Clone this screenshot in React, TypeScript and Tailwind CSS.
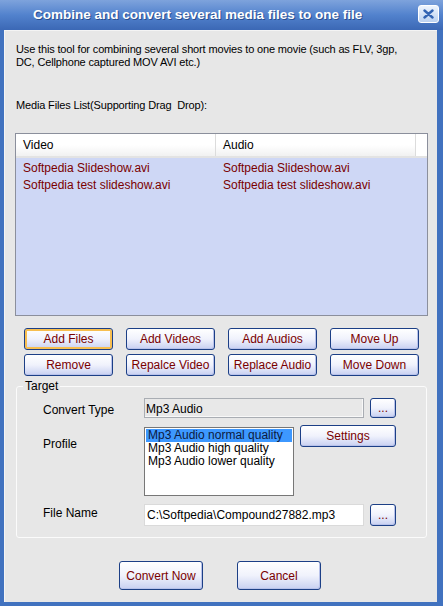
import React from 'react';

const font = { fontFamily: '"Liberation Sans", Arial, sans-serif' };

interface XPButtonProps {
  label: string;
  className?: string;
  focused?: boolean;
}

function XPButton({ label, className = '', focused = false }: XPButtonProps) {
  return (
    <button
      type="button"
      className={
        'flex items-center justify-center rounded-[3px] border border-[#1c3f86] bg-linear-to-b from-white via-[#f0f2fc] to-[#c8d0f1] text-[12px] leading-none text-[#7a0000] ' +
        (focused ? 'shadow-[inset_0_0_0_2px_#f7be4f] ' : 'shadow-[inset_-1px_-1px_0_#b8c2ea] ') +
        className
      }
    >
      {label}
    </button>
  );
}

const rows = [
  ['Softpedia Slideshow.avi', 'Softpedia Slideshow.avi'],
  ['Softpedia test slideshow.avi', 'Softpedia test slideshow.avi'],
];

export default function App() {
  return (
    <div className="flex h-[606px] w-[443px] flex-col bg-[#4172bf] text-[11px] text-black" style={font}>
      {/* title bar */}
      <div className="flex h-[30px] shrink-0 items-center bg-linear-to-b from-[#7ea3dc] via-[#5282cd] to-[#3b68b5] pl-[33px] pr-[4px]">
        <span className="flex-1 text-[13.5px] font-bold text-white [text-shadow:1px_1px_0_#2a4f8f]">
          Combine and convert several media files to one file
        </span>
        <div className="mb-[3px] flex h-[18px] w-[21px] items-center justify-center rounded-[3px] border border-white bg-linear-to-b from-[#eef4fd] to-[#bcd2f0]">
          <svg width="11" height="10" viewBox="0 0 11 10">
            <path d="M1.5 1.5 L9.5 8.5 M9.5 1.5 L1.5 8.5" stroke="#3263b2" strokeWidth="2.4" strokeLinecap="round" />
          </svg>
        </div>
      </div>

      {/* client area */}
      <div className="mb-[4px] ml-[4px] mr-[6px] flex flex-1 flex-col bg-[#e7e7e7] shadow-[inset_1px_1px_0_#f4f4f4]">
        <p className="pl-[12px] pr-[20px] pt-[13px] leading-[13px] tracking-[-0.15px]">
          Use this tool for combining several short movies to one movie (such as FLV, 3gp,
          <br />
          DC, Cellphone captured MOV AVI etc.)
        </p>
        <p className="mt-[30px] pl-[12px] leading-[13px] tracking-[-0.15px]">Media Files List(Supporting Drag&nbsp; Drop):</p>

        {/* list view */}
        <div className="ml-[11px] mt-[21px] flex h-[183px] w-[413px] flex-col border border-[#8b8f9c] bg-[#ced7f5]">
          <div className="flex h-[24px] shrink-0 items-center border-b-[2px] border-[#e3e3e3] bg-linear-to-b from-white via-white to-[#f1f1f1] text-[12px]">
            <div className="flex h-full w-[200px] items-center border-r border-[#dcdcdc] pl-[7px]">Video</div>
            <div className="flex h-full w-[200px] items-center border-r border-[#dcdcdc] pl-[7px]">Audio</div>
            <div className="h-full flex-1 bg-white" />
          </div>
          <div className="pt-[1px]">
            {rows.map((r, i) => (
              <div key={i} className="flex h-[17px] items-center text-[12px] text-[#7a0000]">
                <div className="w-[200px] pl-[7px]">{r[0]}</div>
                <div className="pl-[7px]">{r[1]}</div>
              </div>
            ))}
          </div>
        </div>

        {/* action buttons */}
        <div className="ml-[20px] mt-[12px] grid w-[395px] grid-cols-4 gap-x-[13px] gap-y-[4px]">
          <XPButton label="Add Files" focused className="h-[22px]" />
          <XPButton label="Add Videos" className="h-[22px]" />
          <XPButton label="Add Audios" className="h-[22px]" />
          <XPButton label="Move Up" className="h-[22px]" />
          <XPButton label="Remove" className="h-[22px]" />
          <XPButton label="Repalce Video" className="h-[22px]" />
          <XPButton label="Replace Audio" className="h-[22px]" />
          <XPButton label="Move Down" className="h-[22px]" />
        </div>

        {/* target group */}
        <fieldset className="ml-[12px] mt-[4px] w-[411px] rounded-[3px] border border-[#fbfbfb] pb-[11px]">
          <legend className="ml-[6px] px-[2px] text-[12px] leading-[12px]">Target</legend>
          <div className="mt-[6px] flex items-start">
            <div className="w-[127px] shrink-0 pl-[26px] pt-[3px] text-[12px]">Convert Type</div>
            <div className="h-[20px] w-[220px] border border-[#a9adb3] bg-[#e8e8e8] pl-[1px] pt-[1px] text-[12px] shadow-[inset_-1px_-1px_0_#f8f8f8]">
              Mp3 Audio
            </div>
            <XPButton label="..." className="ml-[6px] h-[20px] w-[26px] text-[10px]" />
          </div>
          <div className="mt-[6px] flex items-start">
            <div className="w-[127px] shrink-0 pl-[26px] pt-[10px] text-[12px]">Profile</div>
            <div className="mt-[2px] h-[69px] w-[150px] border border-[#777] bg-white p-[1px] text-[12px] leading-[13px]">
              <div className="bg-[#3d98ff] pl-[2px] text-[#0d1a40]">Mp3 Audio normal quality</div>
              <div className="pl-[2px]">Mp3 Audio high quality</div>
              <div className="pl-[2px]">Mp3 Audio lower quality</div>
            </div>
            <XPButton label="Settings" className="ml-[6px] h-[22px] w-[96px]" />
          </div>
          <div className="mt-[8px] flex items-start">
            <div className="w-[127px] shrink-0 pl-[26px] pt-[0px] text-[12px]">File Name</div>
            <div className="flex h-[22px] w-[220px] items-center border border-[#dadada] bg-white pl-[2px] text-[12px]">
              C:\Softpedia\Compound27882.mp3
            </div>
            <XPButton label="..." className="ml-[6px] h-[22px] w-[26px] text-[10px]" />
          </div>
        </fieldset>

        {/* bottom buttons */}
        <div className="mt-[23px] flex justify-center gap-[34px] pr-[1px]">
          <XPButton label="Convert Now" className="h-[29px] w-[84px]" />
          <XPButton label="Cancel" className="h-[29px] w-[84px]" />
        </div>
      </div>
    </div>
  );
}
